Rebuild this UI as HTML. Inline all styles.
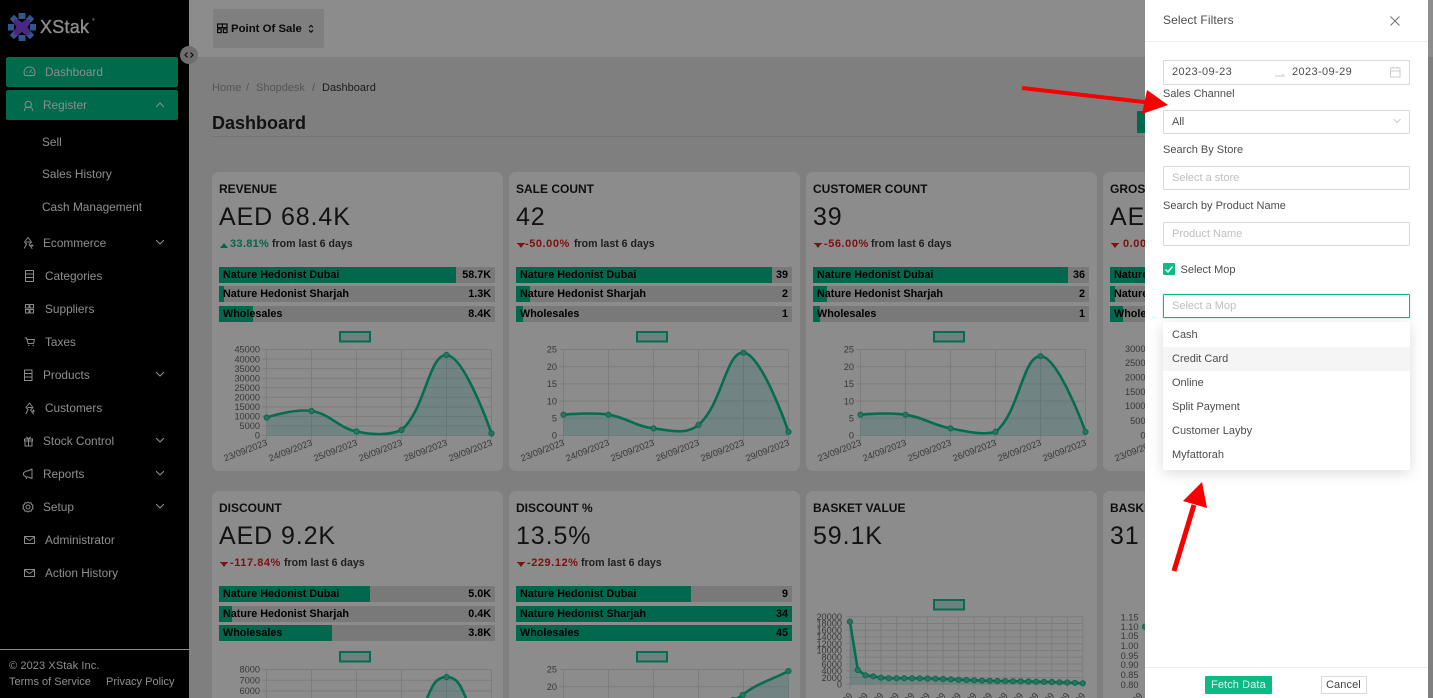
<!DOCTYPE html>
<html lang="en"><head><meta charset="utf-8"><title>Dashboard</title>
<style>
html,body{margin:0;padding:0;width:1433px;height:698px;overflow:hidden;background:#e8e8e8;font-family:"Liberation Sans",sans-serif}
#root{position:relative;width:1433px;height:698px;overflow:hidden;background:#e8e8e8}
.a,.t{position:absolute}
.t{white-space:nowrap;line-height:14px}
.side{left:0;top:0;width:189px;height:698px;background:#000;color:#fff}
.side .t{font-size:11.85px;color:#fff}
.card{position:absolute;width:291px;height:299px;background:#fff;border-radius:7px}
.card.s{height:207px;border-radius:7px 7px 0 0}
.ttl{font-size:12px;font-weight:bold;color:#1a1a1a}
.val{font-size:25px;line-height:30px;letter-spacing:.9px;color:#222}
.dl{font-size:10.6px;font-weight:bold;color:#3a3a3a}
.g{color:#0cba85;font-size:11px;letter-spacing:.3px}.r{color:#e41e1e;font-size:11px;letter-spacing:.55px}
.bar{position:absolute;width:276px;height:15.5px;background:#dcdcdc}
.bar i{position:absolute;left:0;top:0;height:100%;background:#00c08c}
.bar b,.bar u{position:absolute;top:1px;font-size:10.8px;line-height:14px;font-weight:bold;color:#000;text-decoration:none;white-space:nowrap}
.bar b{left:4px}.bar u{right:4px}
.dim{left:0;top:0;width:1433px;height:698px;background:rgba(0,0,0,.45)}
.dr{left:1145px;top:0;width:283px;height:698px;background:#fff;color:#4d4d4d;overflow:hidden}
.dr .t{font-size:11px;color:#4d4d4d}
.in{position:absolute;left:18px;width:245px;height:22px;border:1px solid #d9d9d9;border-radius:1px}
.ph{color:#bfbfbf!important}
svg{position:absolute;left:0;top:0}
svg text{font-family:"Liberation Sans",sans-serif}
</style></head><body>
<div id="root">

<div class="a" style="left:189px;top:0;width:1244px;height:57px;background:#fff"></div>
<div class="a" style="left:213px;top:9px;width:111px;height:39px;background:#e8e8e8;border-radius:2px"></div>
<div class="t" style="left:231px;top:22px;font-size:11.4px;font-weight:bold;color:#111">Point Of Sale</div>

<div class="t" style="left:212px;top:81px;font-size:11px;color:#999">Home</div>
<div class="t" style="left:246px;top:81px;font-size:11px;color:#999">/</div>
<div class="t" style="left:256px;top:81px;font-size:11px;color:#999">Shopdesk</div>
<div class="t" style="left:312px;top:81px;font-size:11px;color:#999">/</div>
<div class="t" style="left:322px;top:81px;font-size:11px;color:#333">Dashboard</div>
<div class="t" style="left:212px;top:113px;font-size:18px;line-height:20px;font-weight:bold;color:#222">Dashboard</div>
<div class="a" style="left:212px;top:136px;width:933px;height:1px;background:#d4d4d4"></div>
<div class="a" style="left:1137px;top:111px;width:8px;height:22px;background:#00c08c"></div>

<!-- cards -->
<div class="card" style="left:212px;top:172px"></div>
<div class="card" style="left:509px;top:172px"></div>
<div class="card" style="left:806px;top:172px"></div>
<div class="card" style="left:1103px;top:172px"></div>
<div class="card s" style="left:212px;top:491px"></div>
<div class="card s" style="left:509px;top:491px"></div>
<div class="card s" style="left:806px;top:491px"></div>
<div class="card s" style="left:1103px;top:491px"></div>

<div class="t ttl" style="left:219px;top:182px">REVENUE</div>
<div class="t val" style="left:219px;top:202px">AED 68.4K</div>
<div class="t dl g" style="left:230px;top:237px">33.81%</div><div class="t dl" style="left:272px;top:237px">from last 6 days</div>
<div class="bar" style="left:219px;top:267px"><i style="width:237px"></i><b>Nature Hedonist Dubai</b><u>58.7K</u></div>
<div class="bar" style="left:219px;top:286px"><i style="width:5px"></i><b>Nature Hedonist Sharjah</b><u>1.3K</u></div>
<div class="bar" style="left:219px;top:306px"><i style="width:34px"></i><b>Wholesales</b><u>8.4K</u></div>

<div class="t ttl" style="left:516px;top:182px">SALE COUNT</div>
<div class="t val" style="left:516px;top:202px">42</div>
<div class="t dl r" style="left:525px;top:237px">-50.00%</div><div class="t dl" style="left:574px;top:237px">from last 6 days</div>
<div class="bar" style="left:516px;top:267px"><i style="width:256px"></i><b>Nature Hedonist Dubai</b><u>39</u></div>
<div class="bar" style="left:516px;top:286px"><i style="width:14px"></i><b>Nature Hedonist Sharjah</b><u>2</u></div>
<div class="bar" style="left:516px;top:306px"><i style="width:7px"></i><b>Wholesales</b><u>1</u></div>

<div class="t ttl" style="left:813px;top:182px">CUSTOMER COUNT</div>
<div class="t val" style="left:813px;top:202px">39</div>
<div class="t dl r" style="left:824px;top:237px">-56.00%</div><div class="t dl" style="left:871px;top:237px">from last 6 days</div>
<div class="bar" style="left:813px;top:267px"><i style="width:255px"></i><b>Nature Hedonist Dubai</b><u>36</u></div>
<div class="bar" style="left:813px;top:286px"><i style="width:14px"></i><b>Nature Hedonist Sharjah</b><u>2</u></div>
<div class="bar" style="left:813px;top:306px"><i style="width:7px"></i><b>Wholesales</b><u>1</u></div>

<div class="t ttl" style="left:1110px;top:182px">GROSS SALES</div>
<div class="t val" style="left:1110px;top:202px">AED 60.0K</div>
<div class="t dl r" style="left:1123px;top:237px">0.00%</div>
<div class="bar" style="left:1110px;top:267px"><i style="width:255px"></i><b>Nature Hedonist Dubai</b></div>
<div class="bar" style="left:1110px;top:286px"><i style="width:5px"></i><b>Nature Hedonist Sharjah</b></div>
<div class="bar" style="left:1110px;top:306px"><i style="width:13px"></i><b>Wholesales</b></div>

<div class="t ttl" style="left:219px;top:501px">DISCOUNT</div>
<div class="t val" style="left:219px;top:521px">AED 9.2K</div>
<div class="t dl r" style="left:230px;top:556px">-117.84%</div><div class="t dl" style="left:284px;top:556px">from last 6 days</div>
<div class="bar" style="left:219px;top:586px"><i style="width:151px"></i><b>Nature Hedonist Dubai</b><u>5.0K</u></div>
<div class="bar" style="left:219px;top:606px"><i style="width:13px"></i><b>Nature Hedonist Sharjah</b><u>0.4K</u></div>
<div class="bar" style="left:219px;top:625px"><i style="width:113px"></i><b>Wholesales</b><u>3.8K</u></div>

<div class="t ttl" style="left:516px;top:501px">DISCOUNT %</div>
<div class="t val" style="left:516px;top:521px">13.5%</div>
<div class="t dl r" style="left:527px;top:556px">-229.12%</div><div class="t dl" style="left:581px;top:556px">from last 6 days</div>
<div class="bar" style="left:516px;top:586px"><i style="width:175px"></i><b>Nature Hedonist Dubai</b><u>9</u></div>
<div class="bar" style="left:516px;top:606px"><i style="width:276px"></i><b>Nature Hedonist Sharjah</b><u>34</u></div>
<div class="bar" style="left:516px;top:625px"><i style="width:276px"></i><b>Wholesales</b><u>45</u></div>

<div class="t ttl" style="left:813px;top:501px">BASKET VALUE</div>
<div class="t val" style="left:813px;top:521px">59.1K</div>
<div class="t ttl" style="left:1110px;top:501px">BASKET SIZE</div>
<div class="t val" style="left:1110px;top:521px">31</div>

<svg width="1433" height="698" viewBox="0 0 1433 698">
<defs>
<marker id="m" markerUnits="userSpaceOnUse" markerWidth="8" markerHeight="8" refX="4" refY="4"><circle cx="4" cy="4" r="2.6" fill="#5ccbb0" stroke="#0ac791" stroke-width="1"/></marker>
</defs>
<!-- triangles -->
<g fill="#0cba85"><path d="M220 248L224 243L228 248Z"/></g>
<g fill="#e41e1e">
<path d="M517 243h8v1h-1L521 248L518 244h-1Z"/><path d="M814 243h8v1h-1L818 248L815 244h-1Z"/><path d="M1111 243h8v1h-1L1115 248L1112 244h-1Z"/>
<path d="M220 562h8v1h-1L224 567L221 563h-1Z"/><path d="M517 562h8v1h-1L521 567L518 563h-1Z"/>
</g>
<!-- legends -->
<g fill="#c9ecec" stroke="#0ac791" stroke-width="2">
<rect x="340" y="332" width="30" height="9.5"/><rect x="637" y="332" width="30" height="9.5"/><rect x="934" y="332" width="30" height="9.5"/>
<rect x="340" y="652" width="30" height="9.5"/><rect x="637" y="652" width="30" height="9.5"/><rect x="934" y="600" width="30" height="9.5"/>
</g>
<!-- grids -->
<g stroke="#000" stroke-opacity=".11" stroke-width="1" fill="none">
<path d="M266.5 349.5V441M311.5 349.5V441M356.5 349.5V441M401.5 349.5V441M446.5 349.5V441M491.5 349.5V441M262 349.5H491.5M262 359.1H491.5M262 368.6H491.5M262 378.2H491.5M262 387.7H491.5M262 397.3H491.5M262 406.9H491.5M262 416.4H491.5M262 426H491.5M262 435.5H491.5"/>
<path d="M563.5 349.5V441M608.5 349.5V441M653.5 349.5V441M698.5 349.5V441M743.5 349.5V441M788.5 349.5V441M559 349.5H788.5M559 366.7H788.5M559 383.9H788.5M559 401.1H788.5M559 418.3H788.5M559 435.5H788.5"/>
<path d="M860.5 349.5V441M905.5 349.5V441M950.5 349.5V441M995.5 349.5V441M1040.5 349.5V441M1085.5 349.5V441M856 349.5H1085.5M856 366.7H1085.5M856 383.9H1085.5M856 401.1H1085.5M856 418.3H1085.5M856 435.5H1085.5"/>
<path d="M266.5 669.5V698M311.5 669.5V698M356.5 669.5V698M401.5 669.5V698M446.5 669.5V698M491.5 669.5V698M262 669.5H491.5M262 680.2H491.5M262 690.9H491.5"/>
<path d="M563.5 669.5V698M608.5 669.5V698M653.5 669.5V698M698.5 669.5V698M743.5 669.5V698M788.5 669.5V698M559 669.5H788.5M559 686.7H788.5"/>
<path d="M850 616.7V689M865.5 616.7V689M881 616.7V689M896.6 616.7V689M912.1 616.7V689M927.6 616.7V689M943.1 616.7V689M958.6 616.7V689M974.2 616.7V689M989.7 616.7V689M1005.2 616.7V689M1020.7 616.7V689M1036.2 616.7V689M1051.8 616.7V689M1067.3 616.7V689M1082.8 616.7V689M846 616.7H1082.8M846 623.5H1082.8M846 630.2H1082.8M846 637H1082.8M846 643.7H1082.8M846 650.5H1082.8M846 657.3H1082.8M846 664H1082.8M846 670.8H1082.8M846 677.5H1082.8M846 684.3H1082.8"/>
</g>
<!-- areas -->
<g fill="#4bc0c0" fill-opacity=".27">
<path d="M266.7 417.5C266.7 417.5 294.3 408.3 311.5 411C330.3 413.9 337.6 427.5 356.5 431.5C373.6 435.1 389.3 435.3 401.5 430C425.3 409.8 428.8 354.3 446.5 355C464.8 355.7 491.5 433.5 491.5 433.5V435.5H266.7Z"/>
<path d="M563.5 414.7C563.5 414.7 590.9 412 608.5 414.7C626.9 417.5 635.1 426.3 653.5 428.4C671.1 430.4 686 435.3 698.5 424.9C722 405.1 726 351.3 743.5 352.7C762 354.1 788.5 431.9 788.5 431.9V435.5H563.5Z"/>
<path d="M860.5 414.7C860.5 414.7 887.9 412 905.5 414.7C923.9 417.5 932.1 424.9 950.5 428.4C968.1 431.8 983.3 435.3 995.5 431.9C1019.3 412.8 1022.5 356.2 1040.5 356.2C1058.5 356.2 1085.5 431.9 1085.5 431.9V435.5H860.5Z"/>
<path d="M420 715C431 690 433 677 446.5 677C460 677 462 690 473 715Z"/>
<path d="M733 700C738 698 740 697 742.7 695C755 684 776 678 788.5 671V700Z"/>
<path d="M850 621.7L857.8 670L865.5 675.3L873.3 676.3L881 677.7L1082.8 683.3V684.3H850Z"/>
</g>
<!-- lines -->
<g fill="none" stroke="#0ac791" stroke-width="2.6" marker-start="url(#m)" marker-mid="url(#m)" marker-end="url(#m)">
<path d="M266.7 417.5C266.7 417.5 294.3 408.3 311.5 411C330.3 413.9 337.6 427.5 356.5 431.5C373.6 435.1 389.3 435.3 401.5 430C425.3 409.8 428.8 354.3 446.5 355C464.8 355.7 491.5 433.5 491.5 433.5"/>
<path d="M563.5 414.7C563.5 414.7 590.9 412 608.5 414.7C626.9 417.5 635.1 426.3 653.5 428.4C671.1 430.4 686 435.3 698.5 424.9C722 405.1 726 351.3 743.5 352.7C762 354.1 788.5 431.9 788.5 431.9"/>
<path d="M860.5 414.7C860.5 414.7 887.9 412 905.5 414.7C923.9 417.5 932.1 424.9 950.5 428.4C968.1 431.8 983.3 435.3 995.5 431.9C1019.3 412.8 1022.5 356.2 1040.5 356.2C1058.5 356.2 1085.5 431.9 1085.5 431.9"/>
<path d="M420 715C431 690 433 677 446.5 677C460 677 462 690 473 715"/>
<path d="M733 700C738 698 740 697 742.7 695C755 684 776 678 788.5 671"/>
<polyline points="850,621.7 857.8,670 865.5,675.3 873.3,676.3 881,677.7 888.8,678.2 896.6,678.2 904.3,678.2 912.1,678.3 919.8,678.3 927.6,678.5 935.4,678.7 943.1,679 950.9,679.3 958.6,679.7 966.4,680 974.2,680.3 981.9,680.6 989.7,680.8 997.4,681 1005.2,681.1 1013,681.2 1020.7,681.3 1028.5,681.5 1036.2,681.7 1044,681.8 1051.8,682 1059.5,682.3 1067.3,682.5 1075,682.8 1082.8,683.3"/>
</g>
<circle cx="1145" cy="626.7" r="2.6" fill="#5ccbb0" stroke="#0ac791"/>
<!-- y ticks -->
<g font-size="9.2" fill="#666" text-anchor="end">
<text x="260" y="352.7">45000</text><text x="260" y="362.3">40000</text><text x="260" y="371.8">35000</text><text x="260" y="381.4">30000</text><text x="260" y="390.9">25000</text><text x="260" y="400.5">20000</text><text x="260" y="410.1">15000</text><text x="260" y="419.6">10000</text><text x="260" y="429.2">5000</text><text x="260" y="438.7">0</text>
<text x="557" y="352.7">25</text><text x="557" y="369.9">20</text><text x="557" y="387.1">15</text><text x="557" y="404.3">10</text><text x="557" y="421.5">5</text><text x="557" y="438.7">0</text>
<text x="854" y="352.7">25</text><text x="854" y="369.9">20</text><text x="854" y="387.1">15</text><text x="854" y="404.3">10</text><text x="854" y="421.5">5</text><text x="854" y="438.7">0</text>
<text x="1145.5" y="352">3000</text><text x="1145.5" y="366">2500</text><text x="1145.5" y="380.5">2000</text><text x="1145.5" y="395">1500</text><text x="1145.5" y="409">1000</text><text x="1145.5" y="424">500</text><text x="1145.5" y="438.7">0</text>
<text x="260" y="672.7">8000</text><text x="260" y="683.4">7000</text><text x="260" y="694">6000</text>
<text x="557" y="672.7">25</text><text x="557" y="690">20</text>
<text x="842" y="620">20000</text><text x="842" y="626.7">18000</text><text x="842" y="633.5">16000</text><text x="842" y="640.2">14000</text><text x="842" y="647">12000</text><text x="842" y="653.7">10000</text><text x="842" y="660.5">8000</text><text x="842" y="667.3">6000</text><text x="842" y="674">4000</text><text x="842" y="680.8">2000</text><text x="842" y="687.5">0</text>
<text x="1138.5" y="620.5">1.15</text><text x="1138.5" y="630">1.10</text><text x="1138.5" y="639.2">1.05</text><text x="1138.5" y="649">1.00</text><text x="1138.5" y="659">0.95</text><text x="1138.5" y="668.2">0.90</text><text x="1138.5" y="678">0.85</text><text x="1138.5" y="688">0.80</text>
</g>
<!-- x ticks -->
<g font-size="9.2" fill="#666" text-anchor="end">
<text transform="translate(268,445) rotate(-21)">23/09/2023</text><text transform="translate(313,445) rotate(-21)">24/09/2023</text><text transform="translate(358,445) rotate(-21)">25/09/2023</text><text transform="translate(403,445) rotate(-21)">26/09/2023</text><text transform="translate(448,445) rotate(-21)">28/09/2023</text><text transform="translate(493,445) rotate(-21)">29/09/2023</text>
<text transform="translate(565,445) rotate(-21)">23/09/2023</text><text transform="translate(610,445) rotate(-21)">24/09/2023</text><text transform="translate(655,445) rotate(-21)">25/09/2023</text><text transform="translate(700,445) rotate(-21)">26/09/2023</text><text transform="translate(745,445) rotate(-21)">28/09/2023</text><text transform="translate(790,445) rotate(-21)">29/09/2023</text>
<text transform="translate(862,445) rotate(-21)">23/09/2023</text><text transform="translate(907,445) rotate(-21)">24/09/2023</text><text transform="translate(952,445) rotate(-21)">25/09/2023</text><text transform="translate(997,445) rotate(-21)">26/09/2023</text><text transform="translate(1042,445) rotate(-21)">28/09/2023</text><text transform="translate(1087,445) rotate(-21)">29/09/2023</text>
<text transform="translate(1159,445) rotate(-21)">23/09/2023</text>
<text transform="translate(853,696) rotate(-50)">23/09</text><text transform="translate(868.5,696) rotate(-50)">23/09</text><text transform="translate(884,696) rotate(-50)">23/09</text><text transform="translate(899.6,696) rotate(-50)">23/09</text><text transform="translate(915.1,696) rotate(-50)">23/09</text><text transform="translate(930.6,696) rotate(-50)">23/09</text><text transform="translate(946.1,696) rotate(-50)">23/09</text><text transform="translate(961.6,696) rotate(-50)">23/09</text><text transform="translate(977.2,696) rotate(-50)">23/09</text><text transform="translate(992.7,696) rotate(-50)">23/09</text><text transform="translate(1008.2,696) rotate(-50)">23/09</text><text transform="translate(1023.7,696) rotate(-50)">23/09</text><text transform="translate(1039.2,696) rotate(-50)">23/09</text><text transform="translate(1054.8,696) rotate(-50)">23/09</text><text transform="translate(1070.3,696) rotate(-50)">23/09</text><text transform="translate(1085.8,696) rotate(-50)">23/09</text>
<text transform="translate(1143,696) rotate(-50)">23/09</text>
</g>
<!-- POS button icons -->
<g fill="none" stroke="#111" stroke-width="1.2"><rect x="217.6" y="24" width="9.4" height="3.6"/><rect x="217.6" y="29" width="3.6" height="3.6"/><rect x="223.4" y="29" width="3.6" height="3.6"/><path d="M222.3 24V27.6"/></g>
<path d="M309 27.4L311 25.4L313 27.4M309 30.2L311 32.2L313 30.2" fill="none" stroke="#111" stroke-width="1.1"/>
</svg>

<!-- sidebar -->
<div class="a side">
<svg width="189" height="698" viewBox="0 0 189 698">
<g fill="#5a9bff">
<rect x="18.5" y="13" width="7" height="6"/><rect x="18.5" y="35" width="7" height="6"/><rect x="8" y="24" width="6" height="6.5"/><rect x="30" y="24" width="6" height="6.5"/>
<rect x="11" y="16" width="6" height="6" transform="rotate(45 14 19)"/><rect x="27" y="16" width="6" height="6" transform="rotate(45 30 19)"/><rect x="11" y="32" width="6" height="6" transform="rotate(45 14 35)"/><rect x="27" y="32" width="6" height="6" transform="rotate(45 30 35)"/>
</g>
<path d="M14 19.5L19 20L22 22.5L25 20L30 19.5L30 24L27.5 27L30 30.5L30 35L25 34.5L22 32L19 34.5L14 35L14 30.5L16.5 27L14 24Z" fill="#8849ec"/>
<rect x="6" y="57" width="172" height="30" rx="2" fill="#00c28a"/>
<rect x="6" y="90" width="172" height="30" rx="2" fill="#00c28a"/>
<g fill="none" stroke="#fff" stroke-width="1" stroke-linecap="round" stroke-linejoin="round">
<path d="M25 75.5A5.5 5.5 0 1 1 34 75.5ZM29.5 72.5L31.5 70M26.5 72h.5M32 72.8h.5"/>
<path d="M31.5 104.5a3.2 3.2 0 1 1-6.4 0a3.2 3.2 0 1 1 6.4 0ZM24.5 110.5c0-2.8 1.6-3.4 4-3.4s4 .6 4 3.4"/>
<path d="M156.5 106.5L160 103L163.5 106.5M156.5 240.5L160 244L163.5 240.5M156.5 372.5L160 376L163.5 372.5M156.5 438.5L160 442L163.5 438.5M156.5 471.5L160 475L163.5 471.5M156.5 504.500L160 508L163.5 504.5" stroke-width="1.2"/>
<path d="M28 237.5L24.5 242L26.5 244L24.500 248M28 237.5L31.5 242L29 244.5L32 248.5M26.5 242h3.5M31 245.5h2M32 244.5v2"/>
<path d="M29.5 403L26 407.5L28 409.5L26 413.5M29.5 403L33 407.5L30.5 410L33.5 414M28 407.5h3.5M32.5 411h2M33.5 410v2"/>
<rect x="25.5" y="270.5" width="8" height="11"/><path d="M25.5 274h8M25.5 277.5h8"/>
<rect x="25.5" y="304.5" width="3.5" height="3.5"/><rect x="30" y="304.5" width="3.5" height="3.5"/><rect x="25.5" y="309.5" width="3.5" height="3.5"/><rect x="30" y="309.5" width="3.5" height="3.5"/>
<path d="M25 338h1.5l1.500 5.500h5.500l1-4H27M28.500 345.500h.5M33 345.500h.5"/>
<rect x="24.5" y="370" width="7.5" height="10.5"/><path d="M24.5 373.5h7.5M24.5 377h7.5"/>
<path d="M24.5 439h8v2h-8ZM25 441v5h7v-5M28.5 439v7M26.5 437l2 2l2-2"/>
<path d="M32 469v9.5l-4-1.5h-2l-2.5-2v-2l2.500-2h2ZM26 477l.5 1.500"/>
<circle cx="28" cy="507" r="2"/><path d="M28 502l1.300 1 1.700-.3.5 1.700 1.500.8-.5 1.800.5 1.800-1.500.8-.5 1.700-1.700-.3-1.300 1-1.300-1-1.700.3-.5-1.700-1.500-.8.5-1.800-.5-1.800 1.500-.8.5-1.700 1.700.3Z"/>
<rect x="24.5" y="536.5" width="10" height="7"/><path d="M24.5 537l5 3.500l5-3.500"/>
<rect x="24.5" y="569.5" width="10" height="7"/><path d="M24.5 570l5 3.500l5-3.500"/>
</g>
<text x="92" y="21" font-size="4" fill="#fff">®</text>
<path d="M0 649.5H189" stroke="#fff" stroke-width="1"/>
</svg>
<div class="t" style="left:40px;top:17px;font-size:18px;line-height:20px;letter-spacing:.25px;color:#fff;-webkit-text-stroke:.35px #fff">XStak</div>
<div class="t" style="left:45px;top:65px">Dashboard</div>
<div class="t" style="left:43px;top:98px">Register</div>
<div class="t" style="left:42px;top:134.5px">Sell</div>
<div class="t" style="left:42px;top:167px">Sales History</div>
<div class="t" style="left:42px;top:200px">Cash Management</div>
<div class="t" style="left:43px;top:236px">Ecommerce</div>
<div class="t" style="left:45px;top:269px">Categories</div>
<div class="t" style="left:45px;top:302px">Suppliers</div>
<div class="t" style="left:45px;top:335px">Taxes</div>
<div class="t" style="left:43px;top:368px">Products</div>
<div class="t" style="left:45px;top:401px">Customers</div>
<div class="t" style="left:43px;top:434px">Stock Control</div>
<div class="t" style="left:43px;top:467px">Reports</div>
<div class="t" style="left:43px;top:500px">Setup</div>
<div class="t" style="left:45px;top:533px">Administrator</div>
<div class="t" style="left:45px;top:566px">Action History</div>
<div class="t" style="left:9px;top:659px;font-size:11px;letter-spacing:.1px">© 2023 XStak Inc.</div>
<div class="t" style="left:9px;top:675px;font-size:11px">Terms of Service</div>
<div class="t" style="left:106px;top:675px;font-size:11px">Privacy Policy</div>
</div>

<div class="a" style="left:180px;top:46px;width:18px;height:18px;border-radius:50%;background:#c9c9c9"></div>
<svg width="200" height="70" viewBox="0 0 200 70"><path d="M187.5 52.5L185 55L187.5 57.5M190.5 52.5L193 55L190.5 57.5" fill="none" stroke="#111" stroke-width="1.1"/></svg>

<div class="a dim"></div>

<!-- drawer -->
<div class="a dr">
<div class="a" style="left:0;top:41px;width:283px;height:1px;background:#eee"></div>
<div class="t" style="left:18px;top:13px;font-size:12px;letter-spacing:.1px">Select Filters</div>
<div class="in" style="top:60px;height:23px"></div>
<div class="t" style="left:27px;top:65px;letter-spacing:.38px">2023-09-23</div>
<div class="t" style="left:147px;top:65px;letter-spacing:.38px">2023-09-29</div>
<div class="t" style="left:18px;top:87px">Sales Channel</div>
<div class="in" style="top:110px"></div>
<div class="t" style="left:27px;top:115px">All</div>
<div class="t" style="left:18px;top:143px">Search By Store</div>
<div class="in" style="top:166px"></div>
<div class="t ph" style="left:27px;top:171px">Select a store</div>
<div class="t" style="left:18px;top:199px">Search by Product Name</div>
<div class="in" style="top:222px"></div>
<div class="t ph" style="left:27px;top:227px">Product Name</div>
<div class="a" style="left:18px;top:263px;width:12px;height:12px;background:#0cba85;border-radius:1px"></div>
<div class="t" style="left:35.5px;top:263px">Select Mop</div>
<div class="in" style="top:294px;border-color:#0cba85;box-shadow:0 0 0 1px rgba(12,186,133,.12)"></div>
<div class="t ph" style="left:27px;top:299px">Select a Mop</div>
<div class="a" style="left:18px;top:322px;width:247px;height:148px;background:#fff;border-radius:2px;box-shadow:0 3px 14px rgba(0,0,0,.14)"></div>
<div class="a" style="left:18px;top:347px;width:247px;height:24px;background:#f5f5f5"></div>
<div class="t" style="left:27px;top:328px">Cash</div>
<div class="t" style="left:27px;top:352px">Credit Card</div>
<div class="t" style="left:27px;top:376px">Online</div>
<div class="t" style="left:27px;top:400px">Split Payment</div>
<div class="t" style="left:27px;top:424px">Customer Layby</div>
<div class="t" style="left:27px;top:448px">Myfattorah</div>
<div class="a" style="left:0;top:667px;width:283px;height:1px;background:#eee"></div>
<div class="a" style="left:60px;top:676px;width:67px;height:18px;background:#0cba85;border-radius:1px"></div>
<div class="t" style="left:66px;top:678px;color:#dff5ee;letter-spacing:.1px">Fetch Data</div>
<div class="a" style="left:176px;top:676px;width:44px;height:16px;border:1px solid #d9d9d9"></div>
<div class="t" style="left:181px;top:678px;letter-spacing:.1px;color:#444">Cancel</div>
<svg width="283" height="698" viewBox="0 0 283 698">
<path d="M245.5 16.5L254.5 25.5M254.5 16.5L245.5 25.5" stroke="#777" stroke-width="1.1" fill="none"/>
<path d="M130 76h9l-2-2" stroke="#ccc" fill="none"/>
<g stroke="#ccc" fill="none"><rect x="245.5" y="68" width="9.5" height="9"/><path d="M245.5 71h9.5M248 66.500v2M252.5 66.500v2"/></g>
<path d="M248.5 119L252 122.5L255.5 119" stroke="#ccc" fill="none"/>
<path d="M20.5 269.5L23 272L27.5 266.5" stroke="#fff" stroke-width="1.4" fill="none"/>
</svg>
</div>

<!-- red arrows -->
<svg width="1433" height="698" viewBox="0 0 1433 698">
<path d="M1022 88L1148 102.5" stroke="#f60000" stroke-width="4" fill="none"/>
<path d="M1168 105L1147 90L1142 114Z" fill="#f60000"/>
<path d="M1174 571L1194 505" stroke="#f60000" stroke-width="5" fill="none"/>
<path d="M1202 482L1183 501L1207 508Z" fill="#f60000"/>
</svg>
</div>
</body></html>
